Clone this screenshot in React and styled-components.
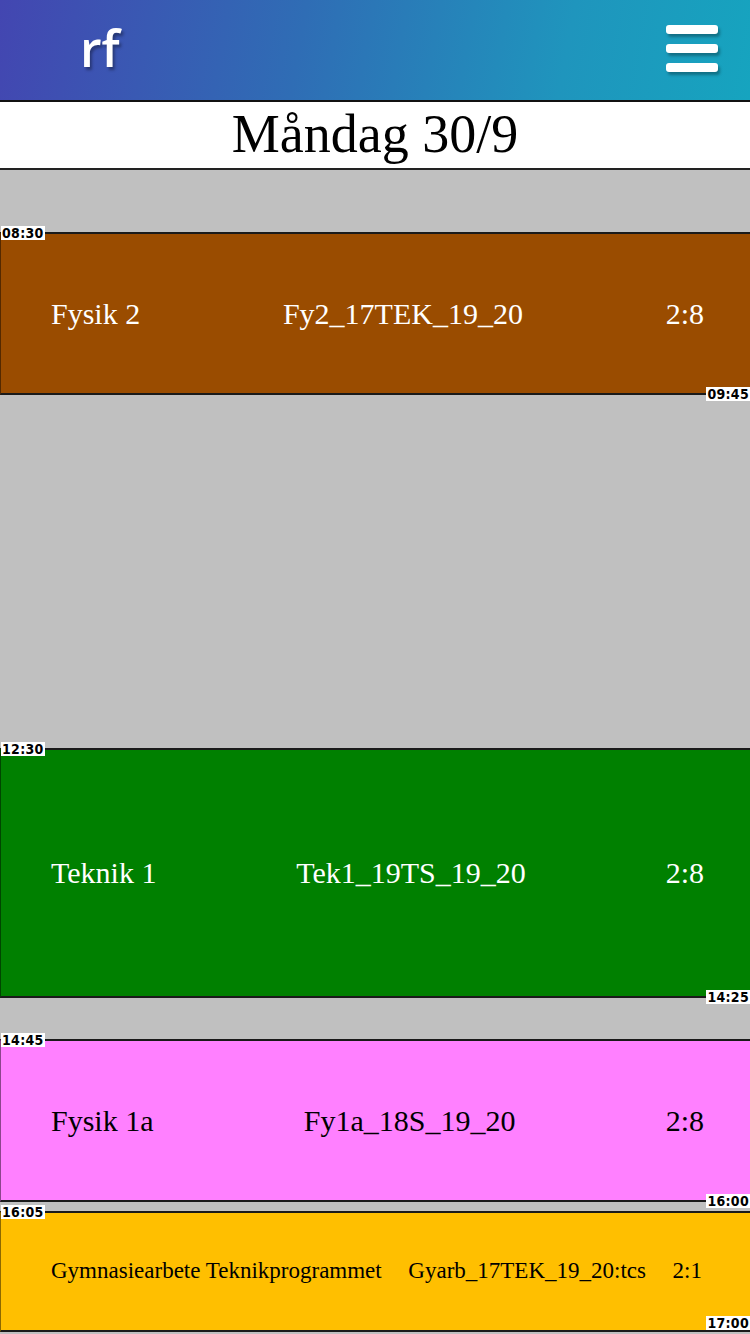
import React from "react";
import styled, { createGlobalStyle } from "styled-components";

const GlobalStyle = createGlobalStyle`
  html, body { margin: 0; padding: 0; }
  body { background: #c0c0c0; font-family: "Liberation Serif", serif; }
  * { box-sizing: border-box; }
`;

const DAY_START = 8 * 60 + 30;
const OFFSET = 62;
const SCALE = 2.152;
const toMin = (t) => {
  const [h, m] = t.split(":").map(Number);
  return h * 60 + m;
};
const yOf = (t) => OFFSET + (toMin(t) - DAY_START) * SCALE;

const lessons = [
  { name: "Fysik 2", code: "Fy2_17TEK_19_20", room: "2:8", start: "08:30", end: "09:45", bg: "#9a4c00", fg: "#ffffff" },
  { name: "Teknik 1", code: "Tek1_19TS_19_20", room: "2:8", start: "12:30", end: "14:25", bg: "#008000", fg: "#ffffff" },
  { name: "Fysik 1a", code: "Fy1a_18S_19_20", room: "2:8", start: "14:45", end: "16:00", bg: "#ff80ff", fg: "#000000" },
  { name: "Gymnasiearbete Teknikprogrammet", code: "Gyarb_17TEK_19_20:tcs", room: "2:1", start: "16:05", end: "17:00", bg: "#ffbf00", fg: "#000000", small: true, last: true },
];

const Page = styled.div`
  width: 750px;
  min-height: 100vh;
  display: flex;
  flex-direction: column;
  overflow: hidden;
`;

const TopBar = styled.header`
  height: 102px;
  display: flex;
  align-items: center;
  justify-content: space-between;
  padding: 0 30px 0 80px;
  background: linear-gradient(100deg, #4346b1 0%, #2f6db5 40%, #1f95bd 75%, #16a4bf 100%);
  border-bottom: 2px solid #111;
`;

const Logo = styled.div`
  font-family: "Open Sans", sans-serif;
  font-size: 50px;
  font-weight: 600;
  color: #fff;
  line-height: 1;
  margin-top: -4px;
  text-shadow: 2px 3px 3px rgba(0, 0, 0, 0.35);
`;

const MenuButton = styled.button`
  width: 54px;
  height: 52px;
  padding: 0;
  border: 0;
  background: transparent;
  display: flex;
  flex-direction: column;
  justify-content: center;
  gap: 10px;
  margin-top: -4px;
`;

const MenuBar = styled.span`
  display: block;
  width: 52px;
  height: 9px;
  border-radius: 3px;
  background: #fff;
  box-shadow: 2px 3px 3px rgba(0, 0, 0, 0.3);
`;

const DayTitle = styled.div`
  height: 68px;
  background: #fff;
  border-bottom: 2px solid #222;
  display: flex;
  align-items: center;
  justify-content: center;
  font-family: "Liberation Serif", serif;
  font-size: 54px;
  color: #000;
  line-height: 1;
  padding-bottom: 2px;
`;

const Timeline = styled.div`
  position: relative;
  flex: 1;
  background: #c0c0c0;
`;

const Block = styled.div`
  position: absolute;
  left: 0;
  right: 0;
  background: ${(p) => p.$bg};
  color: ${(p) => p.$fg};
  border-top: 2px solid #1a1a1a;
  border-bottom: 2px solid #1a1a1a;
  border-left: 1px solid rgba(0, 0, 0, 0.45);
`;

const Row = styled.div`
  height: 100%;
  display: flex;
  align-items: center;
  justify-content: space-between;
  padding: 0 ${(p) => (p.$small ? "48px" : "46px")} 0 50px;
  font-family: "Liberation Serif", serif;
  font-size: ${(p) => (p.$small ? "23px" : "30px")};
  white-space: nowrap;
`;

const Cell = styled.span``;

const TimeTag = styled.span`
  position: absolute;
  z-index: 2;
  background: #fff;
  color: #000;
  font-family: "DejaVu Sans Condensed", "DejaVu Sans", sans-serif;
  font-size: 14px;
  font-weight: bold;
  letter-spacing: 0.3px;
  line-height: 14px;
  padding: 0 1px;
  ${(p) =>
    p.$end
      ? p.$last
        ? "right: 0; bottom: 0;"
        : "right: 0; bottom: -8px;"
      : "left: 0; top: -8px;"}
`;

export default function App() {
  return (
    <>
      <GlobalStyle />
      <Page>
        <TopBar>
          <Logo>rf</Logo>
          <MenuButton aria-label="Meny">
            <MenuBar />
            <MenuBar />
            <MenuBar />
          </MenuButton>
        </TopBar>
        <DayTitle>Måndag 30/9</DayTitle>
        <Timeline>
          {lessons.map((l) => {
            const top = yOf(l.start);
            const height = yOf(l.end) - top + 2;
            return (
              <Block key={l.code} $bg={l.bg} $fg={l.fg} style={{ top, height }}>
                <TimeTag>{l.start}</TimeTag>
                <Row $small={l.small}>
                  <Cell>{l.name}</Cell>
                  <Cell>{l.code}</Cell>
                  <Cell>{l.room}</Cell>
                </Row>
                <TimeTag $end $last={l.last}>{l.end}</TimeTag>
              </Block>
            );
          })}
        </Timeline>
      </Page>
    </>
  );
}
